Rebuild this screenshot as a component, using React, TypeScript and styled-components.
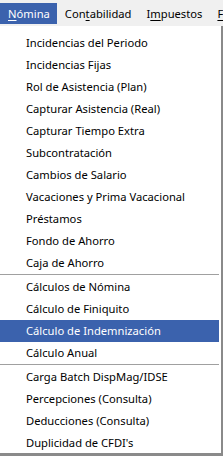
import React from 'react';
import styled, { createGlobalStyle } from 'styled-components';

const GlobalStyle = createGlobalStyle`
    html, body {
        margin: 0;
        padding: 0;
        background: #f0f0f0;
    }
    body {
        font-family: 'Noto Sans', 'Open Sans', sans-serif;
        font-size: 11.2px;
        color: #000;
    }
`;

const highlight = '#3b62ad';

const menuBarItems = [
    { before: '', key: 'N', after: 'ómina', active: true },
    { before: 'Con', key: 't', after: 'abilidad' },
    { before: 'I', key: 'm', after: 'puestos' },
    { before: '', key: 'F', after: 'iscal' },
];

const groups = [
    [
        'Incidencias del Periodo',
        'Incidencias Fijas',
        'Rol de Asistencia (Plan)',
        'Capturar Asistencia (Real)',
        'Capturar Tiempo Extra',
        'Subcontratación',
        'Cambios de Salario',
        'Vacaciones y Prima Vacacional',
        'Préstamos',
        'Fondo de Ahorro',
        'Caja de Ahorro',
    ],
    ['Cálculos de Nómina', 'Cálculo de Finiquito', 'Cálculo de Indemnización', 'Cálculo Anual'],
    ['Carga Batch DispMag/IDSE', 'Percepciones (Consulta)', 'Deducciones (Consulta)', "Duplicidad de CFDI's"],
];

const selected = 'Cálculo de Indemnización';

const App = () => {
    return (
        <>
            <GlobalStyle />
            <Screen>
                <MenuBar>
                    {menuBarItems.map((item, index) => (
                        <BarItem key={index} $active={item.active}>
                            {item.before}
                            <AccessKey>{item.key}</AccessKey>
                            {item.after}
                        </BarItem>
                    ))}
                </MenuBar>
                <Dropdown>
                    {groups.map((group, groupIndex) => (
                        <React.Fragment key={groupIndex}>
                            {groupIndex > 0 && <Separator />}
                            {group.map((label) => (
                                <Item key={label} $selected={label === selected}>
                                    {label}
                                </Item>
                            ))}
                        </React.Fragment>
                    ))}
                </Dropdown>
            </Screen>
        </>
    );
};

const Screen = styled.div`
    width: 223px;
    height: 456px;
    overflow: hidden;
    display: flex;
    flex-direction: column;
    background: #f0f0f0;
`;

const MenuBar = styled.div`
    height: 26px;
    display: flex;
    align-items: flex-start;
    padding-top: 3px;
    box-sizing: border-box;
    white-space: nowrap;
    background: #f0f0f0;
`;

const BarItem = styled.div<{ $active?: boolean }>`
    height: 21px;
    line-height: 21px;
    padding: 0 7px 0 8px;
    flex-shrink: 0;
    background: ${(p) => (p.$active ? highlight : 'transparent')};
    color: ${(p) => (p.$active ? '#fff' : '#000')};
`;

const AccessKey = styled.span`
    text-decoration: underline;
    text-underline-offset: 2px;
`;

const Dropdown = styled.div`
    width: 223px;
    height: 430px;
    display: flex;
    flex-direction: column;
    padding-top: 6px;
    background: #fff;
    border-right: 2px solid #8a8a8a;
    border-bottom: 3px solid #8a8a8a;
    box-sizing: border-box;
`;

const Item = styled.div<{ $selected?: boolean }>`
    height: 22px;
    line-height: 22px;
    flex-shrink: 0;
    padding-left: 26px;
    margin-right: 2px;
    white-space: nowrap;
    background: ${(p) => (p.$selected ? highlight : 'transparent')};
    color: ${(p) => (p.$selected ? '#fff' : '#000')};
`;

const Separator = styled.div`
    height: 2px;
    flex-shrink: 0;
    margin: 0 2px 0 0;
    border-top: 1px solid #a0a0a0;
    border-bottom: 1px solid #fff;
    box-sizing: border-box;
`;

export default App;
